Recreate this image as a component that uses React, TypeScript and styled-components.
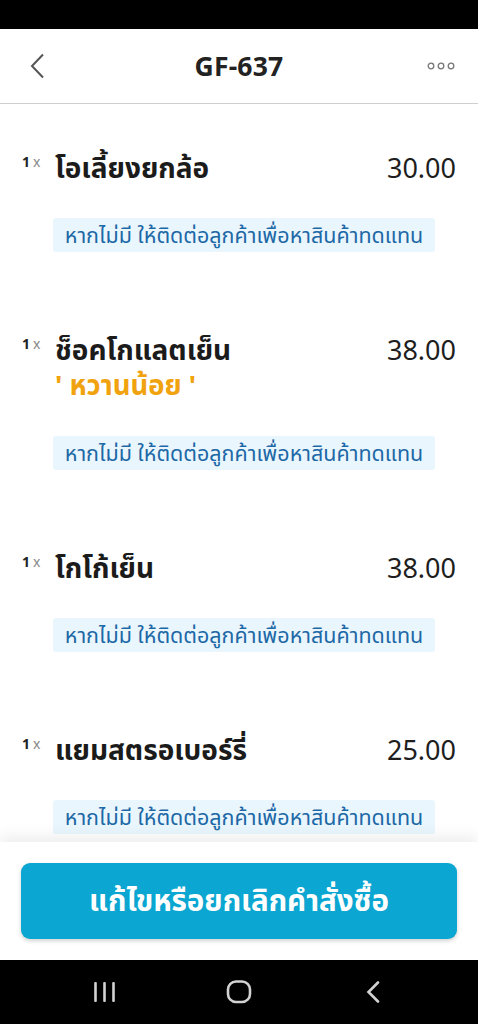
import React from "react";
import styled, { createGlobalStyle } from "styled-components";

const Global = createGlobalStyle`
  html, body { margin: 0; padding: 0; background: #fff; }
  body { font-family: "Noto Sans", "Noto Sans Thai", "Noto Sans Thai UI", sans-serif; }
  * { box-sizing: border-box; }
`;

const Screen = styled.div`
  width: 478px;
  height: 1024px;
  display: flex;
  flex-direction: column;
  overflow: hidden;
  background: #fff;
`;

const StatusBar = styled.div`
  height: 29px;
  background: #000;
  flex: none;
`;

const Header = styled.header`
  height: 75px;
  flex: none;
  display: grid;
  grid-template-columns: 70px 1fr 70px;
  align-items: center;
  border-bottom: 1px solid #cfcfcf;
`;

const IconButton = styled.div<{ $align: "start" | "end" }>`
  display: flex;
  align-items: center;
  justify-content: ${(p) => (p.$align === "start" ? "flex-start" : "flex-end")};
  padding: ${(p) => (p.$align === "start" ? "0 0 0 29px" : "0 23px 0 0")};
`;

const Title = styled.h1`
  margin: 0;
  text-align: center;
  font-size: 26.5px;
  font-weight: 700;
  color: #222;
  letter-spacing: 0.2px;
`;

const Content = styled.main`
  flex: 1;
  overflow: hidden;
  padding: 43px 22px 0 22px;
  display: flex;
  flex-direction: column;
  gap: 77px;
`;

const Item = styled.section`
  display: flex;
  flex-direction: column;
`;

const ItemRow = styled.div`
  display: grid;
  grid-template-columns: 33px 1fr auto;
  align-items: center;
  height: 40px;
`;

const Qty = styled.span`
  align-self: start;
  padding-top: 5px;
  font-size: 14px;
  color: #222;
  font-weight: 700;
  white-space: nowrap;
`;

const QtyX = styled.span`
  font-weight: 400;
  color: #888;
  margin-left: 3px;
`;

const ItemName = styled.span`
  font-size: 28px;
  line-height: 40px;
  font-weight: 700;
  color: #1b1b1b;
`;

const Price = styled.span`
  font-size: 27px;
  color: #1e1e1e;
`;

const Note = styled.div`
  margin-left: 33px;
  height: 34px;
  display: flex;
  align-items: center;
  font-size: 27.5px;
  font-weight: 700;
  color: #f0a30e;
`;

const Tag = styled.div<{ $gap: number }>`
  align-self: flex-start;
  margin-left: 31px;
  margin-top: ${(p) => p.$gap}px;
  height: 34px;
  width: 382px;
  display: flex;
  align-items: center;
  justify-content: center;
  background: #eaf6fd;
  border-radius: 3px;
  color: #1d68a6;
  font-size: 21.5px;
  line-height: 34px;
  white-space: nowrap;
`;

const Footer = styled.footer`
  flex: none;
  height: 118px;
  padding: 21px 21px;
  background: #fff;
  box-shadow: 0 -6px 14px rgba(0, 0, 0, 0.07);
  position: relative;
  z-index: 1;
`;

const ActionButton = styled.button`
  width: 100%;
  height: 76px;
  border: none;
  border-radius: 9px;
  background: #0ba6d1;
  color: #fff;
  font-family: inherit;
  font-size: 29.5px;
  font-weight: 700;
  box-shadow: 0 2px 4px rgba(0, 0, 0, 0.18);
`;

const NavBar = styled.nav`
  flex: none;
  height: 64px;
  background: #000;
  display: grid;
  grid-template-columns: repeat(3, 134px);
  justify-content: center;
  align-items: center;
  justify-items: center;
`;

const Chevron = () => (
  <svg width="16" height="26" viewBox="0 0 16 26">
    <path d="M14 1.5 L3 13 L14 24.5" fill="none" stroke="#555" strokeWidth="2" />
  </svg>
);

const Dots = () => (
  <svg width="28" height="8" viewBox="0 0 28 8">
    {[4, 14, 24].map((cx) => (
      <circle key={cx} cx={cx} cy="4" r="2.8" fill="none" stroke="#777" strokeWidth="1.3" />
    ))}
  </svg>
);

const RecentsIcon = () => (
  <svg width="24" height="22" viewBox="0 0 24 22">
    {[2.5, 11.5, 20.5].map((x) => (
      <rect key={x} x={x - 1.3} y="1" width="2.6" height="20" rx="1" fill="#d2d2d2" />
    ))}
  </svg>
);

const HomeIcon = () => (
  <svg width="26" height="24" viewBox="0 0 26 24">
    <rect x="2" y="1.5" width="22" height="20.5" rx="8" fill="none" stroke="#d2d2d2" strokeWidth="2.6" />
  </svg>
);

const BackIcon = () => (
  <svg width="14" height="22" viewBox="0 0 14 22">
    <path d="M12 1.5 L2.5 11 L12 20.5" fill="none" stroke="#d2d2d2" strokeWidth="2.6" strokeLinecap="round" />
  </svg>
);

type Order = { name: string; price: string; note?: string };

const orders: Order[] = [
  { name: "โอเลี้ยงยกล้อ", price: "30.00" },
  { name: "ช็อคโกแลตเย็น", price: "38.00", note: "' หวานน้อย '" },
  { name: "โกโก้เย็น", price: "38.00" },
  { name: "แยมสตรอเบอร์รี่", price: "25.00" },
];

export default function App() {
  return (
    <>
      <Global />
      <Screen>
        <StatusBar />
        <Header>
          <IconButton $align="start">
            <Chevron />
          </IconButton>
          <Title>GF-637</Title>
          <IconButton $align="end">
            <Dots />
          </IconButton>
        </Header>
        <Content>
          {orders.map((o) => (
            <Item key={o.name}>
              <ItemRow>
                <Qty>
                  1<QtyX>x</QtyX>
                </Qty>
                <ItemName>{o.name}</ItemName>
                <Price>{o.price}</Price>
              </ItemRow>
              {o.note && <Note>{o.note}</Note>}
              <Tag $gap={o.note ? 33 : 31}>หากไม่มี ให้ติดต่อลูกค้าเพื่อหาสินค้าทดแทน</Tag>
            </Item>
          ))}
        </Content>
        <Footer>
          <ActionButton>แก้ไขหรือยกเลิกคำสั่งซื้อ</ActionButton>
        </Footer>
        <NavBar>
          <RecentsIcon />
          <HomeIcon />
          <BackIcon />
        </NavBar>
      </Screen>
    </>
  );
}
